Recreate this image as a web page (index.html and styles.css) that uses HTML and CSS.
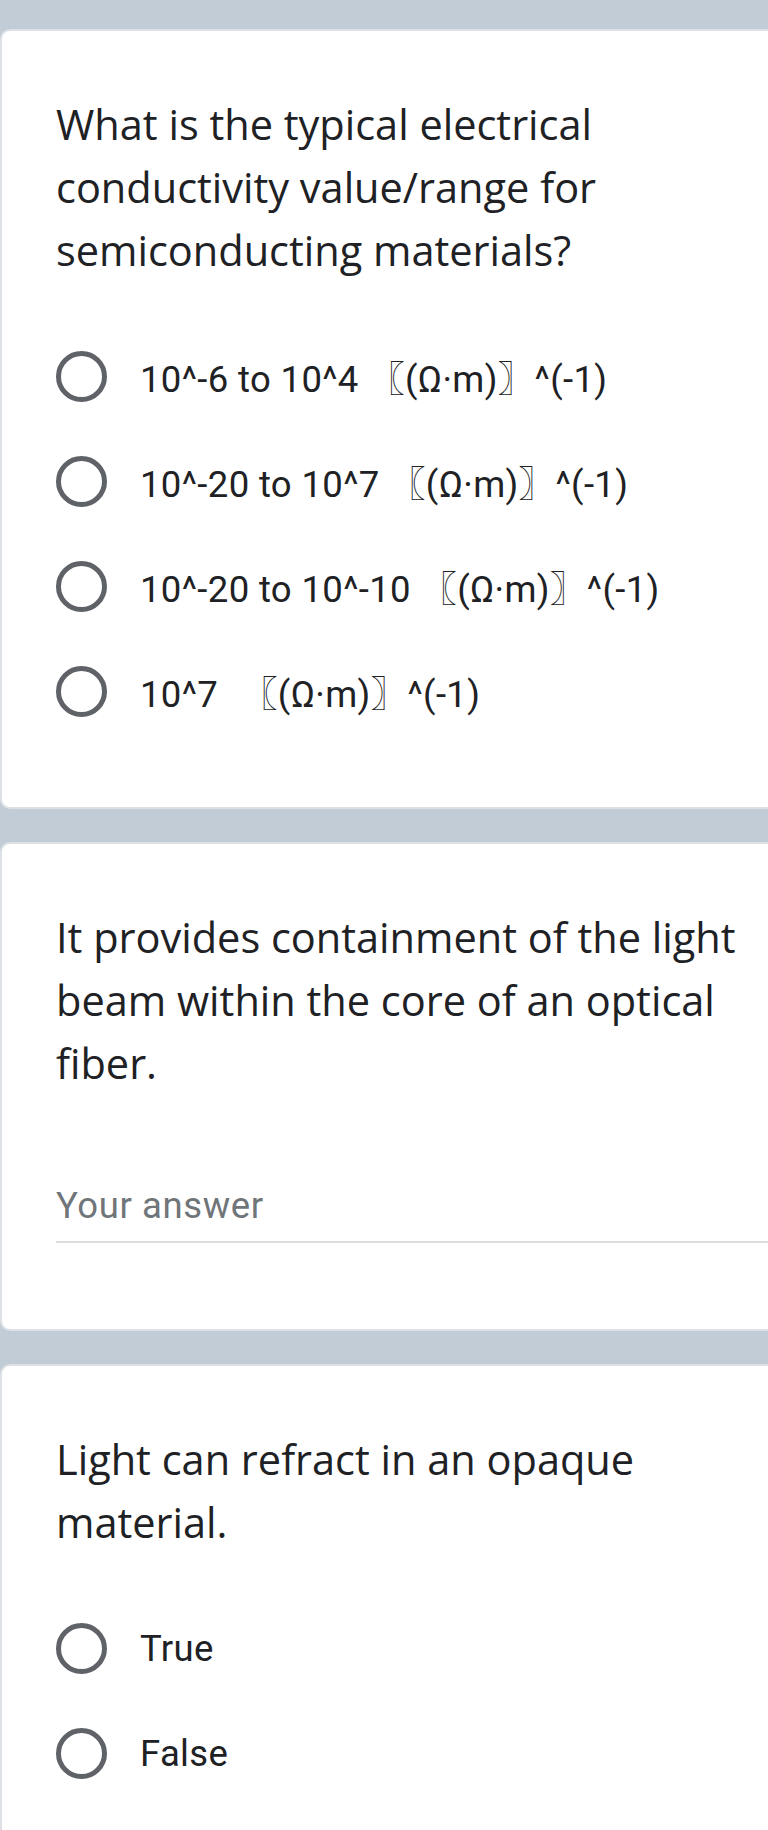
FILE: index.html
```html
<!DOCTYPE html>
<html>
<head>
<meta charset="utf-8">
<link rel="stylesheet" href="styles.css">
</head>
<body>
<div class="page">
  <section class="card">
    <div class="title">What is the typical electrical conductivity value/range for semiconducting materials?</div>
    <div class="options">
      <div class="option"><span class="radio"></span><span class="label">10^-6 to 10^4 〖(Ω·m)〗^(-1)</span></div>
      <div class="option"><span class="radio"></span><span class="label">10^-20 to 10^7 〖(Ω·m)〗^(-1)</span></div>
      <div class="option"><span class="radio"></span><span class="label">10^-20 to 10^-10 〖(Ω·m)〗^(-1)</span></div>
      <div class="option"><span class="radio"></span><span class="label">10^7 &nbsp;<span class="unit">〖(Ω·m)〗^(-1)</span></span></div>
    </div>
  </section>
  <section class="card card-text">
    <div class="title">It provides containment of the light beam within the core of an optical fiber.</div>
    <div class="answer">Your answer</div>
  </section>
  <section class="card card-last">
    <div class="title">Light can refract in an opaque material.</div>
    <div class="options">
      <div class="option"><span class="radio"></span><span class="label">True</span></div>
      <div class="option"><span class="radio"></span><span class="label">False</span></div>
    </div>
  </section>
</div>
</body>
</html>
```
FILE: styles.css
```css
html, body {
  margin: 0;
  padding: 0;
  background: #c1ccd7;
  overflow: hidden;
}
.page {
  width: 768px;
  height: 1830px;
  overflow: hidden;
  padding-top: 29px;
  box-sizing: border-box;
  display: flex;
  flex-direction: column;
  gap: 33px;
}
.card {
  background: #ffffff;
  border: 2px solid #dde1e6;
  border-radius: 10px;
  width: 800px;
  box-sizing: border-box;
  padding: 62px 0 63px 54px;
  flex: none;
}
.title {
  font-family: "Open Sans", "Liberation Sans", sans-serif;
  font-size: 41.5px;
  line-height: 63px;
  color: #202124;
  width: 700px;
  padding-right: 10px;
  box-sizing: border-box;
}
.options {
  margin-top: 42px;
  display: flex;
  flex-direction: column;
}
.option {
  height: 105px;
  display: flex;
  align-items: center;
}
.radio {
  width: 51px;
  height: 51px;
  box-sizing: border-box;
  border: 5px solid #5f6368;
  border-radius: 50%;
  flex: none;
  margin-right: 33px;
}
.label {
  font-family: Roboto, "Noto Sans CJK SC", sans-serif;
  font-size: 36.5px;
  letter-spacing: 0.35px;
  color: #202124;
  white-space: nowrap;
}
.unit {
  margin-left: 4px;
}
.card-text {
  padding-bottom: 86px;
}
.answer {
  margin-top: 86px;
  font-family: Roboto, sans-serif;
  font-size: 36.5px;
  letter-spacing: 0.6px;
  line-height: 50px;
  color: #70757a;
  padding-bottom: 10px;
  border-bottom: 2px solid #dadce0;
}
.card-last {
  flex: 1 0 auto;
}
```
